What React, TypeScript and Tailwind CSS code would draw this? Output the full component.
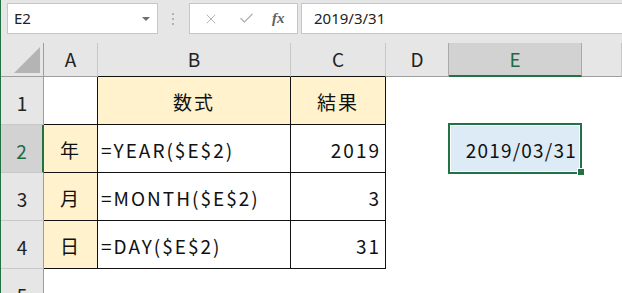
import { X, Check } from "lucide-react";

type Col = { key: string; w: string; label?: boolean };

// column widths include the 1px right line of each cell
const COLS: Col[] = [
  { key: "A", w: "w-[54px]", label: true },
  { key: "B", w: "w-[193px]", label: true },
  { key: "C", w: "w-[95px]", label: true },
  { key: "D", w: "w-[63px]", label: true },
  { key: "E", w: "w-[133px]", label: true },
  { key: "F", w: "flex-1" },
];

const CELL_FONT = "font-['Noto_Sans_CJK_JP',sans-serif] text-[19px] text-[#111]";

function FormulaBar() {
  return (
    <div className="flex h-[43px] items-start bg-[#e6e6e6] pt-[3px]">
      <div className="ml-[6px] flex h-[31px] w-[151px] items-center justify-between border border-[#c6c6c6] bg-white pl-[6px] pr-[7px]">
        <span className="font-['Noto_Sans',sans-serif] text-[15px] text-[#222]">E2</span>
        <span className="h-0 w-0 border-x-[4px] border-t-[4px] border-x-transparent border-t-[#6e6e6e]" />
      </div>
      <div className="ml-[14px] flex h-[31px] flex-col justify-center gap-[3px]">
        <span className="h-[2px] w-[2px] bg-[#b3b3b3]" />
        <span className="h-[2px] w-[2px] bg-[#b3b3b3]" />
        <span className="h-[2px] w-[2px] bg-[#b3b3b3]" />
      </div>
      <div className="ml-[15px] flex h-[31px] w-[109px] items-center border border-[#c6c6c6] bg-white pl-[13px]">
        <X size={16} strokeWidth={1.5} className="text-[#b3b3b3]" />
        <Check size={17} strokeWidth={1.8} className="ml-[19px] text-[#b3b3b3]" />
        <span className="ml-[17px] font-['Liberation_Serif',serif] text-[15px] font-bold italic text-[#606060]">
          fx
        </span>
      </div>
      <div className="ml-[3px] flex h-[31px] flex-1 items-center border border-r-0 border-[#c6c6c6] bg-white pl-[12px]">
        <span className="font-['Noto_Sans',sans-serif] text-[15px] text-[#222]">2019/3/31</span>
      </div>
    </div>
  );
}

function HeaderRow() {
  return (
    <div className="flex h-[34px]">
      <div className="relative w-[43px] border-r border-b border-[#9e9e9e] bg-[#e6e6e6]">
        <svg className="absolute right-[3px] bottom-[3px]" width="26" height="26" viewBox="0 0 26 26">
          <polygon points="26,0 26,26 0,26" fill="#b4b4b4" />
        </svg>
      </div>
      {COLS.map((c) => {
        const sel = c.key === "E";
        const dark = c.key === "D" || c.key === "E";
        const tableTop = c.key === "B" || c.key === "C";
        return (
          <div
            key={c.key}
            className={[
              c.w,
              "flex items-center justify-center font-['Noto_Sans_CJK_JP',sans-serif] text-[19px]",
              sel ? "bg-[#d2d2d2] text-[#1e6b41]" : "bg-[#e6e6e6] text-[#222]",
              dark ? "border-r border-r-[#a9a9a9]" : "border-r border-r-[#c8c8c8]",
              sel
                ? "border-b-2 border-b-[#217346]"
                : tableTop
                  ? "border-b border-b-[#111]"
                  : "border-b border-b-[#9e9e9e]",
            ].join(" ")}
          >
            {c.label ? c.key : null}
          </div>
        );
      })}
    </div>
  );
}

type Cell = {
  text?: string;
  fill?: string;
  align?: "left" | "center" | "right";
  track?: string;
  boxR?: boolean;
  boxB?: boolean;
};

type RowSpec = { n: number; selected?: boolean; cells: Record<string, Cell> };

const ROWS: RowSpec[] = [
  {
    n: 1,
    cells: {
      A: { boxR: true, boxB: true },
      B: { text: "数式", fill: "bg-[#fff2cc]", align: "center", boxR: true, boxB: true },
      C: { text: "結果", fill: "bg-[#fff2cc]", align: "center", boxR: true, boxB: true },
    },
  },
  {
    n: 2,
    selected: true,
    cells: {
      A: { text: "年", fill: "bg-[#fff2cc]", align: "center", boxR: true, boxB: true },
      B: { text: "=YEAR($E$2)", align: "left", boxR: true, boxB: true },
      C: { text: "2019", align: "right", boxR: true, boxB: true },
      E: { text: "2019/03/31", fill: "bg-[#ddebf7]", align: "right", track: "tracking-[1.2px]" },
    },
  },
  {
    n: 3,
    cells: {
      A: { text: "月", fill: "bg-[#fff2cc]", align: "center", boxR: true, boxB: true },
      B: { text: "=MONTH($E$2)", align: "left", boxR: true, boxB: true },
      C: { text: "3", align: "right", boxR: true, boxB: true },
    },
  },
  {
    n: 4,
    cells: {
      A: { text: "日", fill: "bg-[#fff2cc]", align: "center", boxR: true, boxB: true },
      B: { text: "=DAY($E$2)", align: "left", boxR: true, boxB: true },
      C: { text: "31", align: "right", boxR: true, boxB: true },
    },
  },
  { n: 5, cells: {} },
];

function SheetRow({ row }: { row: RowSpec }) {
  return (
    <div className="flex h-[48px]">
      <div
        className={[
          "flex w-[43px] items-center justify-center border-b border-b-[#c8c8c8] pt-[5px] font-['Noto_Sans_CJK_JP',sans-serif] text-[19px]",
          row.selected
            ? "border-r-2 border-r-[#217346] bg-[#d2d2d2] text-[#1e6b41]"
            : "border-r border-r-[#9e9e9e] bg-[#e6e6e6] text-[#222]",
        ].join(" ")}
      >
        {row.n}
      </div>
      {COLS.map((c) => {
        const cell = row.cells[c.key] ?? {};
        const align =
          cell.align === "center"
            ? "justify-center"
            : cell.align === "right"
              ? "justify-end pr-[4px]"
              : "justify-start pl-[3px]";
        return (
          <div
            key={c.key}
            className={[
              c.w,
              "flex items-center pt-[3px]",
              align,
              cell.fill ?? "bg-white",
              cell.boxR ? "border-r border-r-[#111]" : "border-r border-r-transparent",
              cell.boxB ? "border-b border-b-[#111]" : "border-b border-b-transparent",
              CELL_FONT,
              cell.track ?? "tracking-[2px]",
            ].join(" ")}
          >
            {cell.text}
          </div>
        );
      })}
    </div>
  );
}

export default function App() {
  return (
    <div className="relative h-[293px] w-[622px] overflow-hidden border-l border-[#217346] bg-white">
      <FormulaBar />
      <HeaderRow />
      {ROWS.map((r) => (
        <SheetRow key={r.n} row={r} />
      ))}

      {/* active cell outline and fill handle */}
      <div className="pointer-events-none absolute top-[123px] left-[447px] h-[51px] w-[134px] border-2 border-[#217346]">
        <div className="h-full w-full border border-white" />
      </div>
      <div className="absolute top-[168px] left-[576px] h-[8px] w-[8px] border border-white bg-[#217346]" />
    </div>
  );
}
